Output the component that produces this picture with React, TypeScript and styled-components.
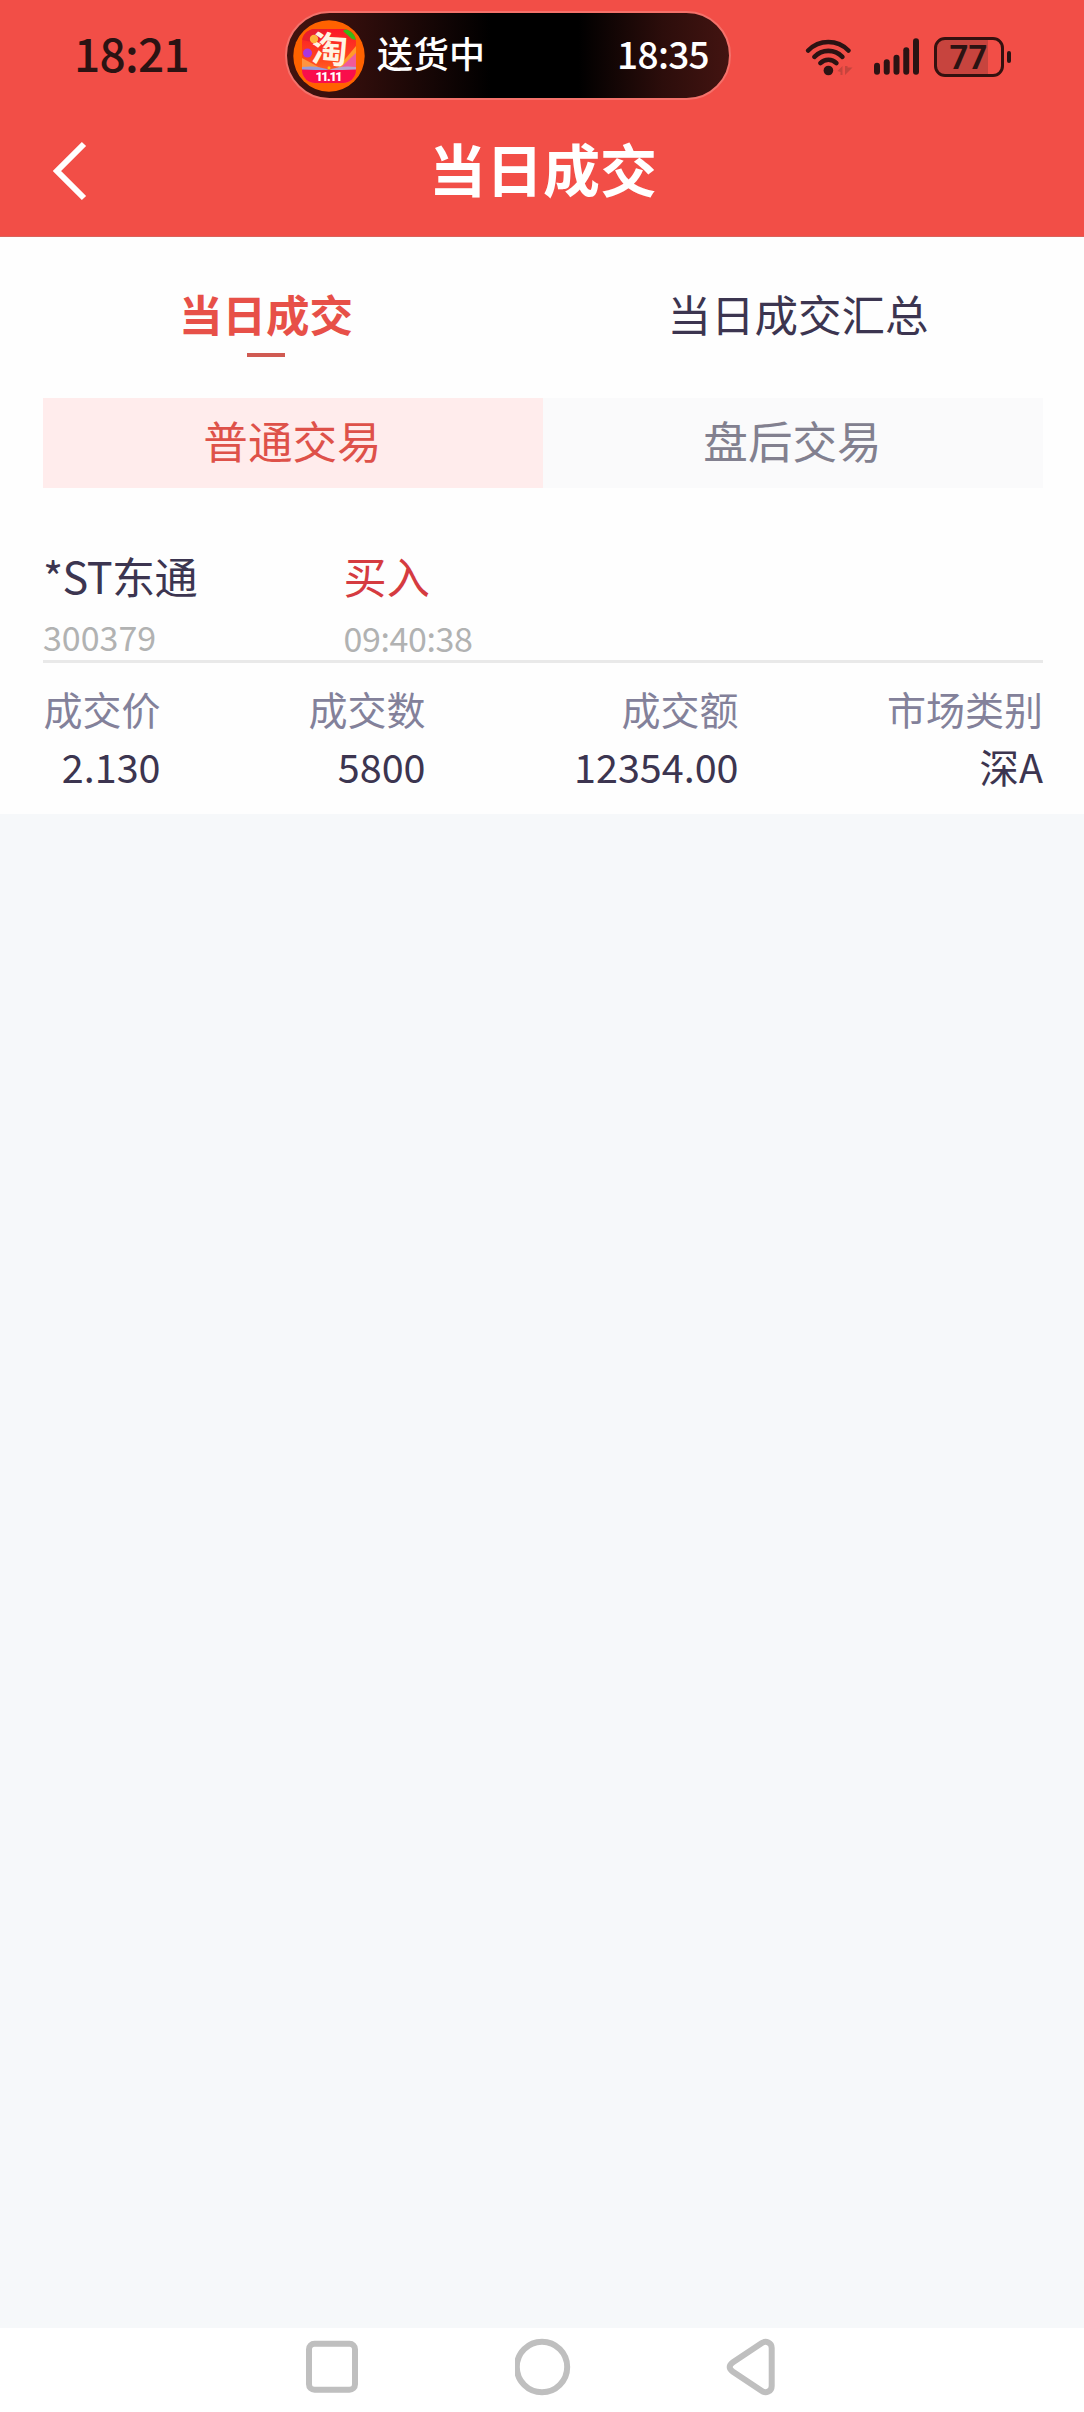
import React from "react";
import styled, { createGlobalStyle } from "styled-components";

const GlobalStyle = createGlobalStyle`
  * { box-sizing: border-box; }
  body {
    margin: 0;
    background: #f6f8fa;
    font-family: "Noto Sans CJK SC", "Noto Sans", sans-serif;
  }
`;

const Screen = styled.div`
  display: flex;
  flex-direction: column;
  width: 1084px;
  height: 2412px;
  overflow: hidden;
  background: #f6f8fa;
  white-space: nowrap;
`;

const Header = styled.header`
  height: 237px;
  background: #f24e47;
  border-bottom: 1px solid #d9635b;
`;

const StatusBar = styled.div`
  display: flex;
  align-items: center;
  height: 111px;
`;

const Clock = styled.div`
  width: 285px;
  padding: 0 0 8px 74px;
  font-size: 46px;
  line-height: 60px;
  font-weight: 500;
  letter-spacing: -0.7px;
  color: #2b1313;
`;

const Island = styled.div`
  display: flex;
  align-items: center;
  width: 446px;
  height: 89px;
  padding: 0 20px 0 6px;
  border: 2.5px solid #f4716a;
  border-radius: 45px;
  background: linear-gradient(90deg, #43130f 0%, #320e0c 15%, #000 46%, #000 66%, #2c0d0b 85%, #431411 100%);
  color: #fff;
  font-weight: 500;
`;

const Logo = styled.svg`
  display: block;
  overflow: visible;
`;

const IslandLabel = styled.span`
  flex: 1;
  padding: 0 0 7px 12px;
  font-size: 36px;
  line-height: 50px;
`;

const IslandTime = styled.span`
  padding-bottom: 6px;
  font-size: 37px;
  line-height: 50px;
  letter-spacing: -0.7px;
`;

const Indicators = styled.div`
  display: flex;
  align-items: center;
  padding: 2px 0 0 74px;
`;

const SignalIcon = styled.svg`
  display: block;
  margin: 0 15px 0 20px;
`;

const Battery = styled.div`
  display: flex;
  align-items: center;
  justify-content: center;
  width: 70px;
  height: 40px;
  border: 3px solid #34110f;
  border-radius: 11px;
  background: linear-gradient(90deg, #c7443e 0 51px, #f24e47 51px);
  font-family: Roboto, sans-serif;
  font-size: 33px;
  line-height: 36px;
  font-weight: 700;
  color: #2b1313;
`;

const BatteryCharge = styled.span`
  padding: 2px 1px 0 0;
`;

const BatteryTip = styled.div`
  width: 4px;
  height: 12px;
  margin-left: 3px;
  border-radius: 2px;
  background: #2b1313;
`;

const TitleBar = styled.div`
  display: grid;
  grid-template-columns: 120px 1fr 118px;
  align-items: center;
  height: 125px;
`;

const BackButton = styled.button`
  display: flex;
  padding: 0 0 5px 50px;
  border: 0;
  background: none;
`;

const Title = styled.h1`
  margin: 0;
  padding-bottom: 13px;
  text-align: center;
  font-size: 57px;
  line-height: 80px;
  font-weight: 700;
  color: #fff;
`;

const Panel = styled.main`
  background: #fefefe;
  height: 577px;
`;

const Tabs = styled.div`
  display: grid;
  grid-template-columns: 532px 532px;
  height: 161px;
  padding-top: 47px;
`;

const Tab = styled.div<{ $active?: boolean }>`
  display: flex;
  flex-direction: column;
  align-items: center;
  font-size: 43.5px;
  line-height: 60px;
  font-weight: ${(p) => (p.$active ? 700 : 400)};
  color: ${(p) => (p.$active ? "#e75048" : "#3c3550")};

  &::after {
    content: "";
    width: 38px;
    height: 4px;
    margin-top: 9px;
    background: ${(p) => (p.$active ? "#d05a52" : "transparent")};
  }
`;

const Segments = styled.div`
  display: grid;
  grid-template-columns: 1fr 1fr;
  margin: 0 41px 0 43px;
`;

const Segment = styled.div<{ $active?: boolean }>`
  height: 90px;
  padding-right: 1px;
  text-align: center;
  font-size: 44.6px;
  line-height: 83px;
  color: ${(p) => (p.$active ? "#de5149" : "#82808f")};
  background: ${(p) => (p.$active ? "#ffecec" : "#fafafb")};
`;

const Trade = styled.section`
  margin: 0 41px 0 43px;
  padding-top: 57px;
`;

const TradeHead = styled.div`
  display: grid;
  grid-template-columns: 300.5px 1fr;
  row-gap: 10px;
  padding-bottom: 1px;
  border-bottom: 3px solid #e9e9e9;
`;

const TradeName = styled.div<{ $buy?: boolean }>`
  font-size: 43.2px;
  line-height: 60px;
  letter-spacing: ${(p) => (p.$buy ? "0" : "-0.6px")};
  color: ${(p) => (p.$buy ? "#d53b40" : "#3c3550")};
`;

const TradeMeta = styled.div<{ $tight?: boolean }>`
  padding-top: ${(p) => (p.$tight ? "1px" : "0")};
  font-size: 34px;
  line-height: ${(p) => (p.$tight ? "43px" : "44px")};
  letter-spacing: ${(p) => (p.$tight ? "-0.4px" : "0")};
  color: #b1b2b2;
`;

const Details = styled.dl`
  display: grid;
  grid-template-columns: 117.5px 265px 313px 304.5px;
  margin: 0;
  padding-top: 23px;
`;

const Detail = styled.div`
  display: flex;
  flex-direction: column;
  gap: 14px;
  align-items: flex-end;
  line-height: 44px;
`;

const DetailLabel = styled.dt`
  font-size: 39px;
  color: #83819a;
`;

const DetailValue = styled.dd`
  margin: 0;
  font-size: 39.5px;
  color: #3c3550;
`;

const NavBar = styled.nav`
  display: flex;
  align-items: flex-start;
  height: 84px;
  margin-top: auto;
  padding: 9px 0 0 303px;
  background: #fff;
`;

const NavIcon = styled.svg<{ $gap?: number }>`
  display: block;
  margin-left: ${(p) => p.$gap ?? 0}px;
  fill: none;
  stroke: #bfbfbf;
  stroke-width: 6;
`;

const details = [
  { label: "成交价", value: "2.130" },
  { label: "成交数", value: "5800" },
  { label: "成交额", value: "12354.00" },
  { label: "市场类别", value: "深A" },
];

const DeliveryLogo = () => (
  <Logo width="72" height="72" viewBox="0 0 72 72">
    <defs>
      <clipPath id="tile">
        <rect x="9" y="9" width="54" height="54" rx="13" />
      </clipPath>
      <linearGradient id="glow" x1="0" y1="0" x2="0" y2="1">
        <stop offset="0" stopColor="#fb1728" />
        <stop offset="0.6" stopColor="#ff4a1c" />
        <stop offset="1" stopColor="#ff7a3c" />
      </linearGradient>
    </defs>
    <circle cx="36" cy="36" r="35.7" fill="#ff6200" />
    <g clipPath="url(#tile)">
      <rect x="9" y="9" width="54" height="54" fill="url(#glow)" />
      <path d="M9 9h25l-10 14L9 20z" fill="#e8202c" />
      <path d="M63 26v24H43z" fill="#ff9a2a" />
      <path d="M63 33v14l-18 3z" fill="#f05a9a" />
      <path d="M9 38l22 12H9z" fill="#ff9440" />
      <path d="M50 11l4-3 9 7v5l-4-1z" fill="#38b813" />
      <circle cx="14.5" cy="33" r="4.5" fill="#a936e0" />
      <path d="M9 47q15-2 27 3-12 1-27 0z" fill="#9a9bd8" />
      <path d="M63 47q-15-2-27 3 12 1 27 0z" fill="#b8a3d0" />
      <path d="M9 49.5q27 1 54 0V63H9z" fill="#f90d4b" />
    </g>
    <text x="36.5" y="42.5" textAnchor="middle" fontSize="36" fontWeight="700" fill="#fff4e2" transform="rotate(4 36 30)">
      淘
    </text>
    <circle cx="21" cy="19" r="4.2" fill="#ffb43c" />
    <circle cx="36" cy="47.8" r="1.5" fill="#ffc400" />
    <text x="36" y="61" textAnchor="middle" fontFamily="Roboto, sans-serif" fontSize="12.5" fontWeight="900" textLength="27" fill="#fff">
      11.11
    </text>
  </Logo>
);

const WifiIcon = () => (
  <svg width="49" height="38" viewBox="0 0 49 38" fill="none" stroke="#2b1313" strokeWidth="4.6" strokeLinecap="round">
    <path d="M3.2 12.5a28 28 0 0 1 40.2 0" />
    <path d="M9.4 18.8a19.5 19.5 0 0 1 28 0" />
    <path d="M15.4 25.1a11.4 11.4 0 0 1 16 0" />
    <circle cx="23.4" cy="32.5" r="4.8" fill="#2b1313" stroke="none" />
    <path d="M32.5 33l5-5v9h-2v-3zM40 28v9l7.5-7.5h-5V28z" fill="#c6443d" stroke="none" />
  </svg>
);

const bars = [12, 15.5, 20, 27.5, 36.5];

export default function App() {
  return (
    <Screen>
      <GlobalStyle />
      <Header>
        <StatusBar>
          <Clock>18:21</Clock>
          <Island>
            <DeliveryLogo />
            <IslandLabel>送货中</IslandLabel>
            <IslandTime>18:35</IslandTime>
          </Island>
          <Indicators>
            <WifiIcon />
            <SignalIcon width="45" height="37" viewBox="0 0 45 37" fill="#2b1313">
              {bars.map((h, i) => (
                <rect key={h} x={i * 9.75} y={36.7 - h} width="6" height={h} rx="3" />
              ))}
            </SignalIcon>
            <Battery>
              <BatteryCharge>77</BatteryCharge>
            </Battery>
            <BatteryTip />
          </Indicators>
        </StatusBar>
        <TitleBar>
          <BackButton aria-label="返回">
            <svg width="38" height="60" viewBox="0 0 38 60" fill="none" stroke="#fff" strokeWidth="6">
              <path d="M34 3L7 30l27 27" />
            </svg>
          </BackButton>
          <Title>当日成交</Title>
        </TitleBar>
      </Header>
      <Panel>
        <Tabs>
          <Tab $active>当日成交</Tab>
          <Tab>当日成交汇总</Tab>
        </Tabs>
        <Segments>
          <Segment $active>普通交易</Segment>
          <Segment>盘后交易</Segment>
        </Segments>
        <Trade>
          <TradeHead>
            <TradeName>*ST东通</TradeName>
            <TradeName $buy>买入</TradeName>
            <TradeMeta>300379</TradeMeta>
            <TradeMeta $tight>09:40:38</TradeMeta>
          </TradeHead>
          <Details>
            {details.map((d) => (
              <Detail key={d.label}>
                <DetailLabel>{d.label}</DetailLabel>
                <DetailValue>{d.value}</DetailValue>
              </Detail>
            ))}
          </Details>
        </Trade>
      </Panel>
      <NavBar>
        <NavIcon width="58" height="60" viewBox="0 0 58 60">
          <rect x="6" y="6.7" width="46" height="46" rx="5.5" />
        </NavIcon>
        <NavIcon width="60" height="60" viewBox="0 0 60 60" $gap={154}>
          <circle cx="27" cy="30" r="25.2" />
        </NavIcon>
        <NavIcon width="60" height="60" viewBox="0 0 60 60" $gap={145}>
          <path d="M41.5 6.2L13 25.3Q6.4 30 13 34.7L41.5 53.8C46 56.8 51.7 54.5 51.7 49V11C51.7 5.5 46 3.2 41.5 6.2Z" />
        </NavIcon>
      </NavBar>
    </Screen>
  );
}
